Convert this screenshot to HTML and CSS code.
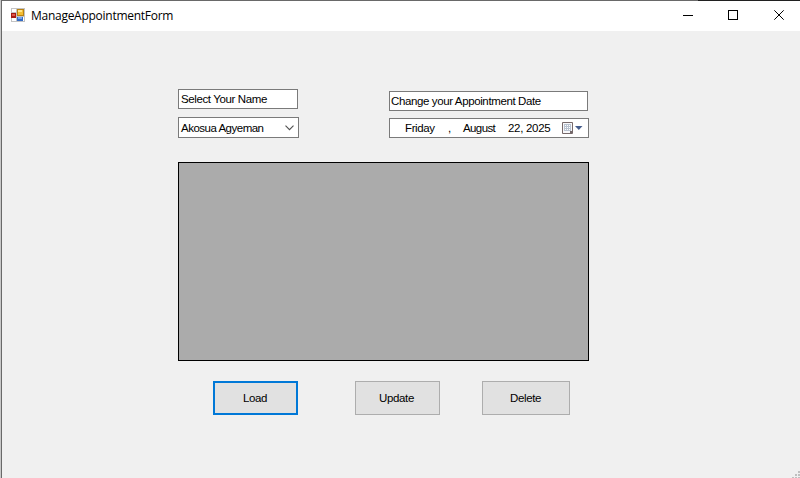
FILE: index.html
```html
<!DOCTYPE html>
<html lang="en">
<head>
<meta charset="utf-8">
<title>ManageAppointmentForm</title>
<link rel="stylesheet" href="styles.css">
</head>
<body>
<div class="window">
  <header class="titlebar">
    <svg class="app-icon" width="14" height="14" viewBox="0 0 14 14" shape-rendering="crispEdges">
      <path fill="#c3c3c3" d="M0 0h14v14H0z"/>
      <path fill="#fff" d="M1 1h4v3H1zM1 10h4v3H1zM12 9h1v4h-1z"/>
      <path fill="#a51a12" d="M0 5h5v5H0z"/><path fill="#e0564b" d="M1 6h3v2H1z"/>
      <path fill="#b98212" d="M6 1h7v7H6z"/><path fill="#f4bd32" d="M7 2h5v5H7z"/><path fill="#ffe58a" d="M7 2h4v2H7z"/>
      <path fill="#346bc4" d="M6 9h6v4H6z"/><path fill="#76a7ee" d="M7 9h4v2H7z"/>
    </svg>
    <h1 class="title">ManageAppointmentForm</h1>
    <svg class="controls" width="104" height="12" viewBox="0 0 104 12" fill="none" stroke="#000">
      <path d="M0 6.5h10M45.500 1.500h9v9h-9z" shape-rendering="crispEdges"/>
      <path d="M91.300 1.300l9.400 9.400M100.700 1.300l-9.400 9.400"/>
    </svg>
  </header>
  <main class="form">
    <div class="fields">
      <div class="name-group">
        <div class="box name-label">Select Your Name</div>
        <div class="box combo">Akosua Agyeman
          <svg width="9" height="6" viewBox="0 0 9 6" fill="none" stroke="#505050" stroke-width="1.100"><path d="M.5.700l4 4 4-4"/></svg>
        </div>
      </div>
      <div class="date-group">
        <div class="box date-label">Change your Appointment Date</div>
        <div class="box picker">
          <span class="day">Friday</span><span class="comma">,</span><span class="month">August</span><span class="date">22, 2025</span>
          <svg width="21" height="12" viewBox="0 0 21 12">
            <path d="M.5.500h10v11H.5z" fill="#f8f8fa" stroke="#76696a"/>
            <path d="M8 12V9h3v1l-2 2z" fill="#75696a"/>
            <path d="M2 2h7v7H2z" fill="#b9c3d1"/>
            <path d="M3 3h1v1H3zM5 3h1v1H5zM7 3h1v1H7zM3 5h1v1H3zM5 5h1v1H5zM7 5h1v1H7zM3 7h1v1H3zM5 7h1v1H5zM7 7h1v1H7z" fill="#fff"/>
            <path d="M13 4h7.500l-3.700 4z" fill="#455c8c"/>
          </svg>
        </div>
      </div>
    </div>
    <div class="grid-view"></div>
    <div class="actions">
      <button class="load">Load</button>
      <button class="update">Update</button>
      <button class="delete">Delete</button>
    </div>
  </main>
  <svg class="grip" width="8" height="8" viewBox="0 0 8 8" fill="#bfbfbf"><path d="M6 1h2v2H6zM3 4h2v2H3zM6 4h2v2H6zM0 7h2v1H0zM3 7h2v1H3zM6 7h2v1H6z"/></svg>
</div>
</body>
</html>
```

FILE: styles.css
```css
* { box-sizing: border-box; }
body { margin: 0; overflow: hidden; background: #c8c8c8; font: 11.5px/14px "Liberation Sans", Arial, sans-serif; letter-spacing: -.38px; color: #000; }
.window { position: relative; width: 799px; height: 478px; margin-left: 1px; border-left: 1px solid #696969; background: #f0f0f0; }
.titlebar { display: flex; align-items: flex-start; height: 31px; padding: 1px 13px 0 9px; background: #fff; border-top: 1px solid; border-image: linear-gradient(90deg, #696969 695px, #202020 695px) 1; }
.app-icon { margin-top: 6px; }
.title { margin: 6px 0 0 6px; font: 12px/16px "Open Sans", "Noto Sans", sans-serif; letter-spacing: -.27px; }
.controls { margin: 7px 0 0 auto; }
.form { padding: 58px 0 0 176px; }
.fields { display: flex; gap: 90px; align-items: flex-start; }
.name-group, .date-group { display: flex; flex-direction: column; }
.name-group { width: 121px; gap: 8px; }
.date-group { width: 200px; gap: 7px; padding-top: 2px; }
.box { display: flex; align-items: center; height: 20px; background: #fff; border: 1px solid #7a7a7a; padding-left: 2px; white-space: nowrap; }
.name-label { width: 120px; }
.combo { height: 21px; justify-content: space-between; padding-right: 4px; letter-spacing: -.5px; }
.date-label { width: 199px; padding-left: 1px; }
.picker { padding-left: 15px; }
.comma { margin-left: 15px; width: 15px; }
.date { margin-left: 12px; letter-spacing: -.3px; }
.picker svg { margin-left: auto; margin-right: 5px; }
.day { width: 28px; }
.month { width: 33px; letter-spacing: -.6px; }
.grid-view { width: 411px; height: 199px; margin-top: 24px; background: #ababab; border: 1px solid #000; }
.actions { display: flex; margin: 20px 0 0 35px; }
button { height: 34px; width: 85px; padding: 0 1px 0 0; border: 1px solid #adadad; background: #e1e1e1; color: #000; font: inherit; letter-spacing: inherit; }
.load { border: 2px solid #0078d7; }
.update { margin-left: 57px; padding-right: 2px; }
.delete { width: 88px; margin-left: 42px; }
.grip { position: absolute; right: 0; bottom: 0; }
```
